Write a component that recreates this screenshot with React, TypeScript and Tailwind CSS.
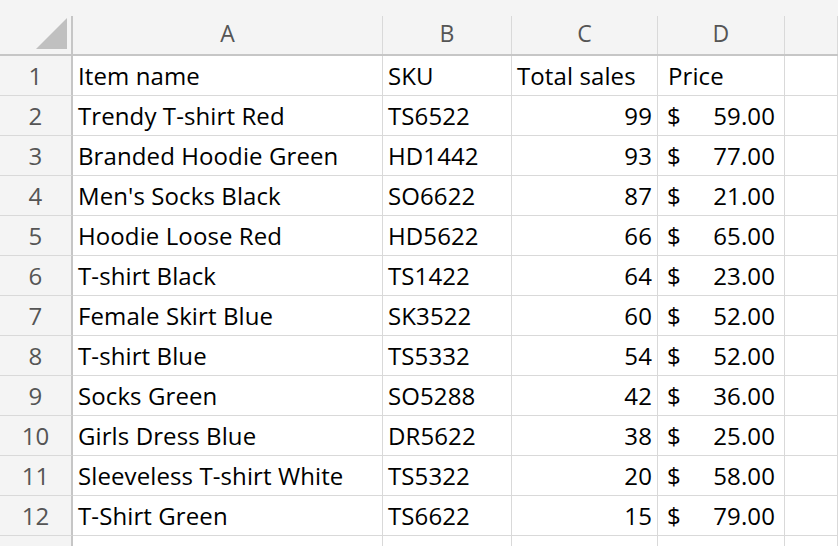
const rows: [string, string, string, string][] = [
  ["Trendy T-shirt Red", "TS6522", "99", "59.00"],
  ["Branded Hoodie Green", "HD1442", "93", "77.00"],
  ["Men's Socks Black", "SO6622", "87", "21.00"],
  ["Hoodie Loose Red", "HD5622", "66", "65.00"],
  ["T-shirt Black", "TS1422", "64", "23.00"],
  ["Female Skirt Blue", "SK3522", "60", "52.00"],
  ["T-shirt Blue", "TS5332", "54", "52.00"],
  ["Socks Green", "SO5288", "42", "36.00"],
  ["Girls Dress Blue", "DR5622", "38", "25.00"],
  ["Sleeveless T-shirt White", "TS5322", "20", "58.00"],
  ["T-Shirt Green", "TS6622", "15", "79.00"],
];
const cols = "grid grid-cols-[73px_310px_129px_146px_127px_1fr]";
const cell = "h-[40px] border-r border-b border-[#d9d9d9] flex items-center px-[5px] bg-white text-black";
const rh = "h-[40px] border-b border-[#d9d9d9] border-r-2 border-r-[#c6c6c6] flex items-center justify-center bg-[#f4f4f4] text-[#555]";

export default function App() {
  return (
    <div className="w-[838px] h-[546px] overflow-hidden bg-white text-[24px]" style={{ fontFamily: '"Open Sans", sans-serif', letterSpacing: "0.1px" }}>
      <div className={cols + " h-[56px] bg-[#f4f4f4] border-b-2 border-[#c6c6c6]"}>
        <div className="relative border-r-2 border-[#c6c6c6] mt-[16px]">
          <svg className="absolute left-[36px] top-[2px]" width="31" height="31"><polygon points="31,0 31,31 0,31" fill="#c0c0c0" /></svg>
        </div>
        {["A", "B", "C", "D", ""].map((l, i) => (
          <div key={i} className="flex flex-col justify-end">
            <div className="h-[38px] border-r border-[#d9d9d9] flex items-center justify-center text-[#555] text-[23px] pb-[4px]">{l}</div>
          </div>
        ))}
      </div>
      <div className={cols}>
        <div className={rh}>1</div>
        <div className={cell}>Item name</div>
        <div className={cell}>SKU</div>
        <div className={cell}>Total sales</div>
        <div className={cell + " pl-[10px]"}>Price</div>
        <div className={cell}></div>
        {rows.map((r, i) => (
          <>
            <div key={"h" + i} className={rh}>{i + 2}</div>
            <div className={cell}>{r[0]}</div>
            <div className={cell}>{r[1]}</div>
            <div className={cell + " justify-end"}>{r[2]}</div>
            <div className={cell + " justify-between pl-[9px] pr-[9px]"}><span>$</span><span>{r[3]}</span></div>
            <div className={cell}></div>
          </>
        ))}
        <div className={rh + " items-start"}>13</div>
        {[0, 1, 2, 3, 4].map((k) => <div key={k} className={cell}></div>)}
      </div>
    </div>
  );
}
